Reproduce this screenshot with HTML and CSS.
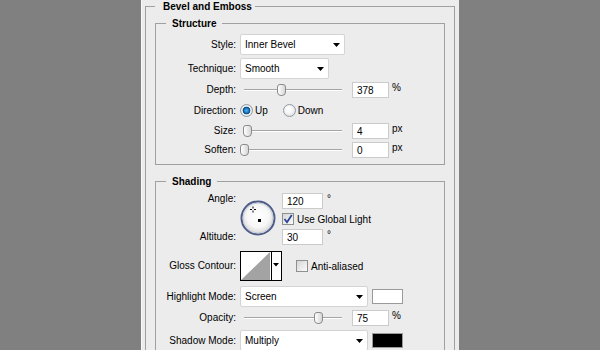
FILE: index.html
```html
<!DOCTYPE html>
<html>

  <head>
    <title>Bevel and Emboss</title>
    <link rel="stylesheet" href="styles.css">
  </head>

  <body>
    <div class="panel">
      <fieldset class="group outer">
        <legend>Bevel and Emboss</legend>

        <fieldset class="group">
          <legend>Structure</legend>

          <div class="row tall">
            <span class="label">Style:</span>
            <div class="select w105">
              <span>Inner Bevel</span>
              <svg class="caret" width="7" height="4" viewBox="0 0 7 4"><path d="M0 0h7L3.5 4z"/></svg>
            </div>
          </div>

          <div class="row tall">
            <span class="label">Technique:</span>
            <div class="select w89">
              <span>Smooth</span>
              <svg class="caret" width="7" height="4" viewBox="0 0 7 4"><path d="M0 0h7L3.5 4z"/></svg>
            </div>
          </div>

          <div class="row">
            <span class="label">Depth:</span>
            <div class="slider"><span class="thumb" style="left:37px"></span></div>
            <span class="num">378</span>
            <span class="unit">%</span>
          </div>

          <div class="row radios">
            <span class="label">Direction:</span>
            <span class="radio on"></span>
            <span class="opt">Up</span>
            <span class="radio"></span>
            <span class="opt">Down</span>
          </div>

          <div class="row">
            <span class="label">Size:</span>
            <div class="slider"><span class="thumb" style="left:3px"></span></div>
            <span class="num">4</span>
            <span class="unit">px</span>
          </div>

          <div class="row">
            <span class="label">Soften:</span>
            <div class="slider"><span class="thumb" style="left:0px"></span></div>
            <span class="num">0</span>
            <span class="unit">px</span>
          </div>
        </fieldset>

        <fieldset class="group shading">
          <legend>Shading</legend>

          <div class="angle">
            <span class="label top">Angle:</span>
            <svg class="dial" width="36" height="36" viewBox="0 0 36 36">
              <defs>
                <radialGradient id="dialFill" cx="50%" cy="45%" r="55%">
                  <stop offset="0" stop-color="#ffffff"/>
                  <stop offset="0.6" stop-color="#f7f7f7"/>
                  <stop offset="1" stop-color="#d4d4d4"/>
                </radialGradient>
              </defs>
              <circle cx="18" cy="18" r="16.5" fill="url(#dialFill)" stroke="#4e5d88" stroke-width="2"/>
              <circle cx="18" cy="18" r="15" fill="none" stroke="#c9cdd8" stroke-width="1"/>
              <path d="M13 6.5v2M13 10.5v2M10 9.5h2M14 9.5h2" stroke="#000" stroke-width="1"/>
              <rect x="18" y="19" width="3" height="3" fill="#000"/>
            </svg>
            <div class="field">
              <span class="num wide">120</span>
              <span class="deg">°</span>
            </div>
            <div class="field">
              <span class="check">
                <svg width="10" height="10" viewBox="0 0 10 10"><path d="M1.5 5l2.5 3.2L8.8 1" fill="none" stroke="#2a4596" stroke-width="1.8"/></svg>
              </span>
              <span>Use Global Light</span>
            </div>
            <span class="label mid">Altitude:</span>
            <div class="field">
              <span class="num wide">30</span>
              <span class="deg">°</span>
            </div>
          </div>

          <div class="row contour">
            <span class="label">Gloss Contour:</span>
            <svg class="curve" width="42" height="30" viewBox="0 0 42 30">
              <rect x="0.5" y="0.5" width="41" height="29" fill="#fff" stroke="#000"/>
              <path d="M1 29L30 1v28z" fill="#a3a3a3"/>
              <path d="M31.5 1v28" stroke="#000"/>
              <path d="M33 12h6l-3 3.5z" fill="#000"/>
            </svg>
            <span class="check"></span>
            <span>Anti-aliased</span>
          </div>

          <div class="row tall highlight">
            <span class="label">Highlight Mode:</span>
            <div class="select w128">
              <span>Screen</span>
              <svg class="caret" width="7" height="4" viewBox="0 0 7 4"><path d="M0 0h7L3.5 4z"/></svg>
            </div>
            <span class="swatch"></span>
          </div>

          <div class="row">
            <span class="label">Opacity:</span>
            <div class="slider"><span class="thumb" style="left:74px"></span></div>
            <span class="num">75</span>
            <span class="unit">%</span>
          </div>

          <div class="row tall shadow">
            <span class="label">Shadow Mode:</span>
            <div class="select w128">
              <span>Multiply</span>
              <svg class="caret" width="7" height="4" viewBox="0 0 7 4"><path d="M0 0h7L3.5 4z"/></svg>
            </div>
            <span class="swatch dark"></span>
          </div>
        </fieldset>
      </fieldset>
    </div>
  </body>

</html>
```

FILE: styles.css
```css
html,
body {
  margin: 0;
  height: 100%;
  overflow: hidden;
}

body {
  background-color: #808080;
  font-family: "Liberation Sans", Arial, sans-serif;
  font-size: 10px;
  color: #000;
}


.panel {
  width: 310px;
  height: 350px;
  margin-left: 141px;
  padding: 0 4px 0 3px;
  border-left: 1px solid #f8f8f8;
  background-color: #ececec;
  overflow: hidden;
}


/* group boxes */
.group {
  margin: 0;
  padding: 4px 0 6px;
  min-width: 0;
  border: 1px solid #a0a0a0;
}

.outer {
  padding: 4px 9px 0;
}

.group + .group {
  margin-top: 10px;
}

.group legend {
  margin-left: 10px;
  padding: 0 6px;
  font-weight: bold;
  line-height: 13px;
}

.outer > legend {
  margin-left: 0;
  padding: 0 3px 0 8px;
}

.shading {
  padding-top: 5px;
}


/* rows */
.row {
  display: flex;
  align-items: center;
  height: 16px;
}

.row + .row {
  margin-top: 3px;
}

.row.tall {
  height: 21px;
}

.row.radios {
  height: 19px;
}

.label {
  flex: none;
  width: 80px;
  margin-right: 4px;
  text-align: right;
  line-height: 12px;
}


/* dropdowns */
.select {
  box-sizing: border-box;
  height: 21px;
  display: flex;
  align-items: center;
  justify-content: space-between;
  padding: 0 4px;
  background-color: #fff;
  border: 1px solid #d4d4d4;
  border-radius: 2px;
}

.w105 {
  width: 105px;
}

.w89 {
  width: 89px;
}

.w128 {
  width: 128px;
}

.caret {
  display: block;
}


/* number fields */
.num {
  flex: none;
  box-sizing: border-box;
  width: 37px;
  height: 16px;
  padding: 0 4px;
  background-color: #fff;
  border: 1px solid #cbcbcb;
  line-height: 15px;
}

.num.wide {
  width: 41px;
}

.slider + .num {
  margin-left: 8px;
}

.unit {
  align-self: flex-start;
  margin-left: 3px;
  line-height: 12px;
}

.deg {
  align-self: flex-start;
  margin-left: 4px;
  line-height: 12px;
}


/* sliders */
.slider {
  position: relative;
  flex: none;
  width: 104px;
  height: 16px;
}

.slider::before {
  content: "";
  position: absolute;
  left: 4px;
  right: 2px;
  top: 7px;
  height: 1px;
  background-color: #a5a5a5;
  box-shadow: 0 1px 0 #fff;
}

.thumb {
  position: absolute;
  top: 2px;
  box-sizing: border-box;
  width: 9px;
  height: 12px;
  border: 1px solid #8b8b8b;
  border-radius: 3px 3px 4px 4px;
  background: linear-gradient(90deg, #fff, #d6d6d6);
}


/* radios and checkboxes */
.radio {
  flex: none;
  box-sizing: border-box;
  width: 13px;
  height: 13px;
  border: 1px solid #8f9ba7;
  border-radius: 50%;
  background: radial-gradient(circle at 45% 40%, #fff 20%, #d6d6d6 100%);
}

.radio.on {
  background: radial-gradient(circle, #4bb6f0 0, #1674bd 2.5px, #0b3f70 3.5px, #f4f4f4 4.2px, #dadada 6px);
}

.opt {
  margin-left: 2px;
}

.opt + .radio {
  margin-left: 15px;
}

.check {
  flex: none;
  box-sizing: border-box;
  width: 12px;
  height: 12px;
  display: flex;
  align-items: center;
  justify-content: center;
  margin-right: 3px;
  border: 1px solid #8e8f8f;
  background: linear-gradient(135deg, #d6d6d6, #fbfbfb);
}


/* angle block */
.angle {
  display: grid;
  grid-template-columns: 80px 38px auto;
  grid-template-rows: 16px 16px 16px;
  column-gap: 4px;
  row-gap: 2px;
}

.angle .label {
  width: auto;
  margin: 0;
  grid-column: 1;
}

.angle .top {
  grid-row: 1;
  align-self: start;
}

.angle .mid {
  grid-row: 3;
  align-self: center;
}

.dial {
  grid-column: 2;
  grid-row: 1 / 4;
  margin-top: 7px;
}

.field {
  grid-column: 3;
  display: flex;
  align-items: center;
}


/* contour and colour rows */
.row.contour {
  height: 30px;
  margin-top: 6px;
}

.curve {
  flex: none;
  display: block;
}

.contour .check {
  margin-left: 14px;
}

.row.highlight {
  margin-top: 5px;
}

.row.shadow {
  margin-top: 4px;
}

.swatch {
  flex: none;
  box-sizing: border-box;
  width: 31px;
  height: 15px;
  margin-left: 4px;
  border: 1px solid #9a9a9a;
  background-color: #fff;
}

.swatch.dark {
  background-color: #000;
}
```
